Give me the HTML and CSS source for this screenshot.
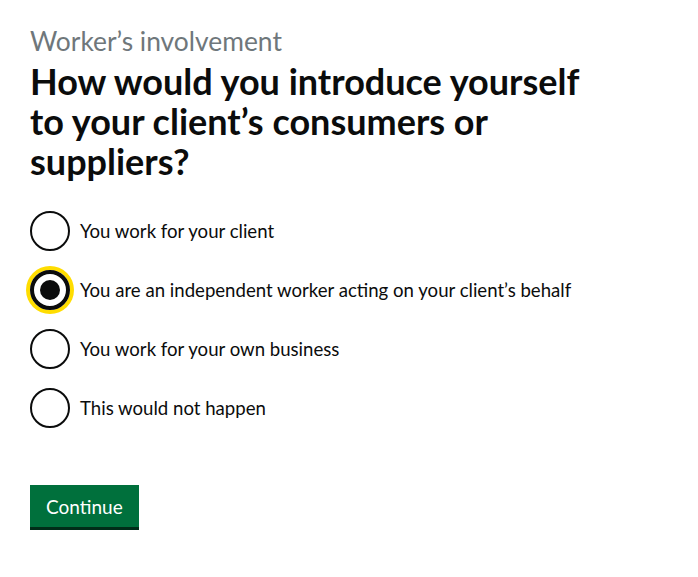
FILE: index.html
```html
<!DOCTYPE html>
<html lang="en">
<head>
  <meta charset="UTF-8">
  <title>Worker's involvement</title>
  <link rel="stylesheet" href="styles.css">
</head>
<body>

<main class="page">
  <form class="question" onsubmit="return false">
    <fieldset class="fieldset">
      <legend class="legend">
        <span class="caption">Worker’s involvement</span>
        <h1 class="heading">How would you introduce yourself to your client’s consumers or suppliers?</h1>
      </legend>

      <div class="radios">
        <label class="radio">
          <input type="radio" name="introduce" value="client">
          <span class="radio-mark"></span>
          <span class="radio-label">You work for your client</span>
        </label>
        <label class="radio">
          <input type="radio" name="introduce" value="independent" checked>
          <span class="radio-mark focused"></span>
          <span class="radio-label">You are an independent worker acting on your client’s behalf</span>
        </label>
        <label class="radio">
          <input type="radio" name="introduce" value="business">
          <span class="radio-mark"></span>
          <span class="radio-label">You work for your own business</span>
        </label>
        <label class="radio">
          <input type="radio" name="introduce" value="none">
          <span class="radio-mark"></span>
          <span class="radio-label">This would not happen</span>
        </label>
      </div>
    </fieldset>

    <button class="button" type="submit">Continue</button>
  </form>
</main>

</body>
</html>
```

FILE: styles.css
```css
body {
  margin: 0;
  font-family: Lato, "Liberation Sans", Arial, sans-serif;
  color: #0b0c0c;
  background: #fff;
}

.page {
  padding: 26px 30px 30px;
}

.fieldset {
  border: 0;
  margin: 0;
  padding: 0;
}

.legend {
  padding: 0;
}

.caption {
  display: block;
  font-size: 26.4px;
  line-height: 30px;
  color: #6f777b;
  margin-bottom: 5px;
}

.heading {
  width: 560px;
  margin: 0 0 30px;
  font-size: 36px;
  line-height: 40px;
  font-weight: 700;
}

.radios {
  display: flex;
  flex-direction: column;
  gap: 19px;
}

.radio {
  display: flex;
  align-items: center;
  gap: 10px;
  cursor: pointer;
}

.radio input {
  display: none;
}

.radio-mark {
  position: relative;
  box-sizing: border-box;
  width: 40px;
  height: 40px;
  border: 2px solid #0b0c0c;
  border-radius: 50%;
  flex-shrink: 0;
}

.radio input:checked + .radio-mark::after {
  content: "";
  position: absolute;
  top: 8px;
  left: 8px;
  width: 20px;
  height: 20px;
  border-radius: 50%;
  background: #0b0c0c;
}

.radio-mark.focused {
  border-width: 4px;
  box-shadow: 0 0 0 4px #ffdd00;
}

.radio input:checked + .radio-mark.focused::after {
  top: 6px;
  left: 6px;
}

.radio-label {
  font-size: 18.6px;
  line-height: 25px;
}

.button {
  margin-top: 57px;
  padding: 9px 16px 8px;
  border: 0;
  background: #00703c;
  color: #fff;
  font-family: inherit;
  font-size: 19px;
  line-height: 25px;
  box-shadow: 0 3px 0 #002d18;
  cursor: pointer;
}

.button:hover {
  background: #005a30;
}
```
